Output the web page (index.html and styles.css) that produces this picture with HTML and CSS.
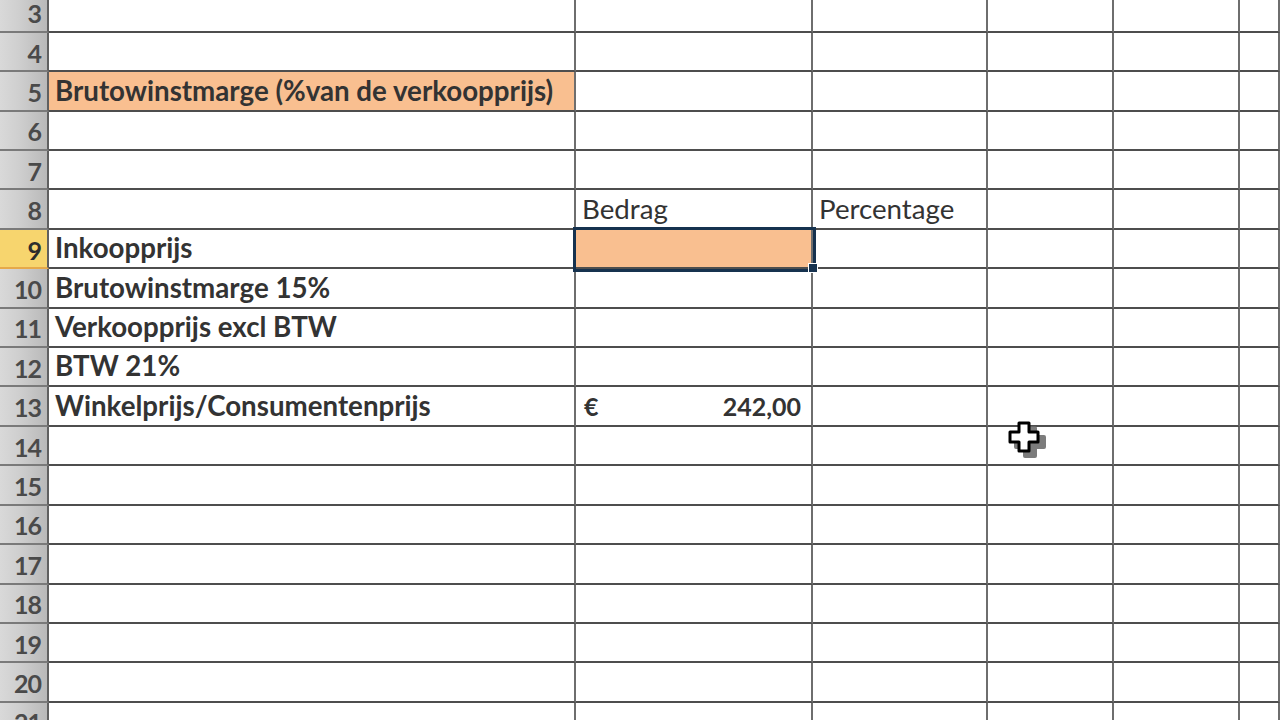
FILE: index.html
```html
<!DOCTYPE html>
<html>
<head>
<meta charset="utf-8">
<link rel="stylesheet" href="styles.css">
</head>
<body>
<div class="sheet">
  <div class="row"><div class="rh">3</div><div class="c a"></div><div class="c b"></div><div class="c cc"></div><div class="c d"></div><div class="c e"></div><div class="c f"></div></div>
  <div class="row"><div class="rh">4</div><div class="c a"></div><div class="c b"></div><div class="c cc"></div><div class="c d"></div><div class="c e"></div><div class="c f"></div></div>
  <div class="row"><div class="rh">5</div><div class="c a fill bold">Brutowinstmarge (%van de verkoopprijs)</div><div class="c b"></div><div class="c cc"></div><div class="c d"></div><div class="c e"></div><div class="c f"></div></div>
  <div class="row"><div class="rh">6</div><div class="c a"></div><div class="c b"></div><div class="c cc"></div><div class="c d"></div><div class="c e"></div><div class="c f"></div></div>
  <div class="row"><div class="rh">7</div><div class="c a"></div><div class="c b"></div><div class="c cc"></div><div class="c d"></div><div class="c e"></div><div class="c f"></div></div>
  <div class="row"><div class="rh">8</div><div class="c a"></div><div class="c b">Bedrag</div><div class="c cc">Percentage</div><div class="c d"></div><div class="c e"></div><div class="c f"></div></div>
  <div class="row"><div class="rh sel">9</div><div class="c a bold">Inkoopprijs</div><div class="c b active"><span class="handle"></span></div><div class="c cc"></div><div class="c d"></div><div class="c e"></div><div class="c f"></div></div>
  <div class="row"><div class="rh">10</div><div class="c a bold">Brutowinstmarge 15%</div><div class="c b"></div><div class="c cc"></div><div class="c d"></div><div class="c e"></div><div class="c f"></div></div>
  <div class="row"><div class="rh">11</div><div class="c a bold">Verkoopprijs excl BTW</div><div class="c b"></div><div class="c cc"></div><div class="c d"></div><div class="c e"></div><div class="c f"></div></div>
  <div class="row"><div class="rh">12</div><div class="c a bold">BTW 21%</div><div class="c b"></div><div class="c cc"></div><div class="c d"></div><div class="c e"></div><div class="c f"></div></div>
  <div class="row"><div class="rh">13</div><div class="c a bold">Winkelprijs/Consumentenprijs</div><div class="c b money bold"><span>€</span><span>242,00</span></div><div class="c cc"></div><div class="c d"></div><div class="c e"></div><div class="c f"></div></div>
  <div class="row"><div class="rh">14</div><div class="c a"></div><div class="c b"></div><div class="c cc"></div><div class="c d"></div><div class="c e"></div><div class="c f"></div></div>
  <div class="row"><div class="rh">15</div><div class="c a"></div><div class="c b"></div><div class="c cc"></div><div class="c d"></div><div class="c e"></div><div class="c f"></div></div>
  <div class="row"><div class="rh">16</div><div class="c a"></div><div class="c b"></div><div class="c cc"></div><div class="c d"></div><div class="c e"></div><div class="c f"></div></div>
  <div class="row"><div class="rh">17</div><div class="c a"></div><div class="c b"></div><div class="c cc"></div><div class="c d"></div><div class="c e"></div><div class="c f"></div></div>
  <div class="row"><div class="rh">18</div><div class="c a"></div><div class="c b"></div><div class="c cc"></div><div class="c d"></div><div class="c e"></div><div class="c f"></div></div>
  <div class="row"><div class="rh">19</div><div class="c a"></div><div class="c b"></div><div class="c cc"></div><div class="c d"></div><div class="c e"></div><div class="c f"></div></div>
  <div class="row"><div class="rh">20</div><div class="c a"></div><div class="c b"></div><div class="c cc"></div><div class="c d"></div><div class="c e"></div><div class="c f"></div></div>
  <div class="row"><div class="rh">21</div><div class="c a"></div><div class="c b"></div><div class="c cc"></div><div class="c d"></div><div class="c e"></div><div class="c f"></div></div>
</div>
<svg class="cursor" width="48" height="44" viewBox="0 0 48 44">
  <path d="M12 2h10v9h9v10h-9v9h-10v-9h-9v-10h9z" transform="translate(6 5)" fill="#666" stroke="#666" stroke-width="4" stroke-linejoin="round" opacity="0.85"/>
  <path d="M12 2h10v9h9v10h-9v9h-10v-9h-9v-10h9z" fill="#fff" stroke="#000" stroke-width="3" stroke-linejoin="round"/>
</svg>
</body>
</html>
```

FILE: styles.css
```css
html, body {
  margin: 0;
  padding: 0;
  background: #fff;
  overflow: hidden;
}
body {
  width: 1280px;
  height: 720px;
  position: relative;
  font-family: Lato, "Liberation Sans", sans-serif;
  color: #333;
}
.sheet {
  margin-top: -6.6px;
  display: flex;
  flex-direction: column;
}
.row {
  display: grid;
  grid-template-columns: 49px 527px 237px 175px 126px 126px 1fr;
  height: 39.41px;
}
.rh {
  background: linear-gradient(90deg, #d9d9d9 0%, #cfcfcf 40%, #b9b9b9 100%);
  border-right: 2px solid #606060;
  border-bottom: 2px solid #7a7a7a;
  box-sizing: border-box;
  display: flex;
  align-items: center;
  justify-content: flex-end;
  padding-right: 6px;
  padding-top: 2px;
  font-size: 25px;
  font-weight: 700;
  letter-spacing: -1px;
  color: #4a4a4a;
}
.rh.sel {
  background: #f7d56e;
  color: #2d2d2d;
  border-bottom-color: #e6a94a;
}
.c {
  box-sizing: border-box;
  border-right: 2px solid #6e6e6e;
  border-bottom: 2px solid #4e4e4e;
  display: flex;
  align-items: flex-end;
  padding: 0 6px 2px 6px;
  font-size: 27.7px;
  line-height: 34px;
  white-space: nowrap;
  position: relative;
}
.fill { background: #f9bf90; }
.bold { font-weight: 700; }
.active {
  background: #f9bf90;
  outline: 3px solid #16324f;
  outline-offset: 0;
  z-index: 2;
}
.handle {
  position: absolute;
  right: -7px;
  bottom: -6px;
  width: 8px;
  height: 8px;
  background: #16324f;
  border: 1px solid #fff;
}
.money {
  justify-content: space-between;
  padding-left: 8px;
  padding-right: 10px;
  font-size: 25px;
}
.cursor {
  position: absolute;
  left: 1007px;
  top: 421px;
}
```
